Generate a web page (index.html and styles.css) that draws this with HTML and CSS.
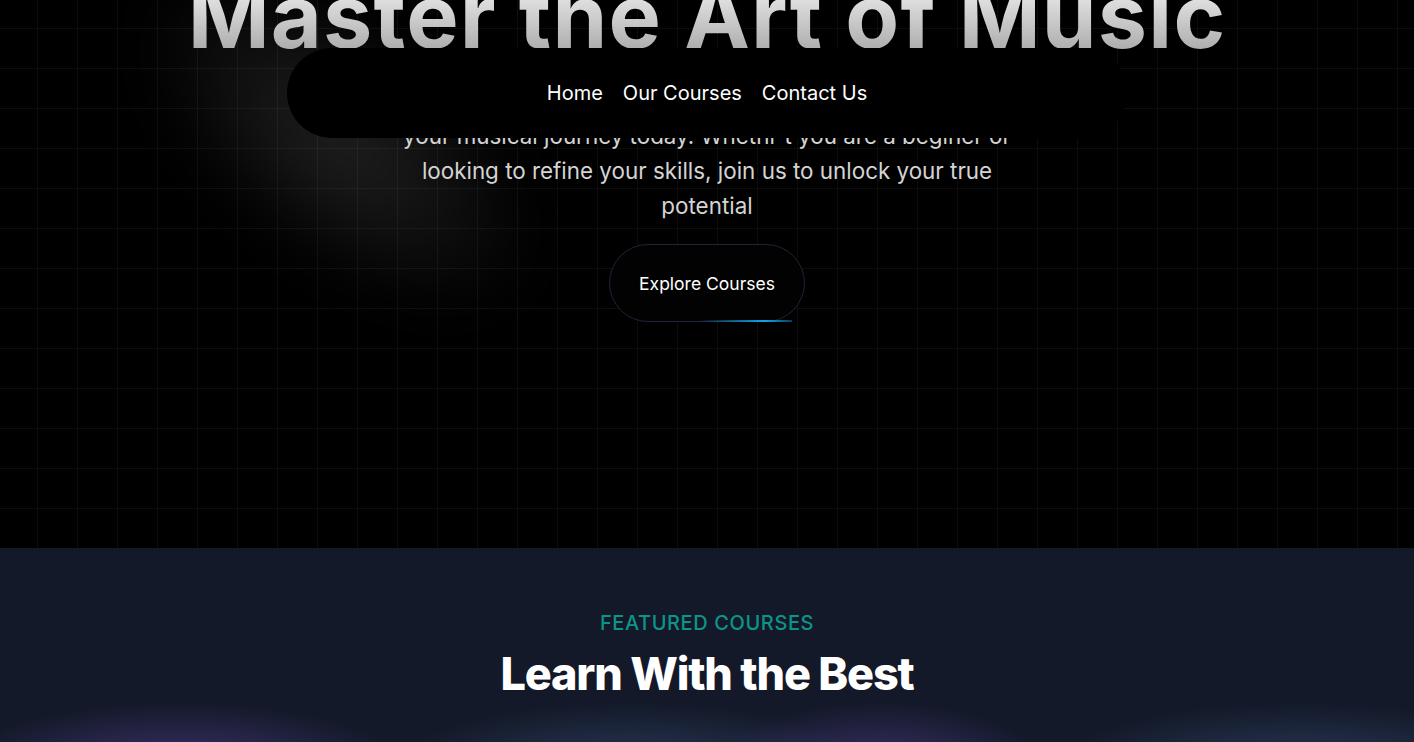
FILE: index.html
```html
<!DOCTYPE html>
<html lang="en">
<head>
<meta charset="utf-8">
<title>Music School</title>
<link rel="stylesheet" href="styles.css">
</head>
<body>
<nav class="nav">
  <a class="nav-link" href="#">Home</a>
  <a class="nav-link" href="#">Our Courses</a>
  <a class="nav-link" href="#">Contact Us</a>
</nav>
<main>
  <section class="hero">
    <div class="spotlight"></div>
    <div class="hero-content">
      <h1 class="hero-title">Master the Art of Music</h1>
      <p class="hero-text">Dive into our comprehensive music courses and transform<br>your musical journey today. Whethr't you are a beginer or looking to refine your skills, join us to unlock your true potential</p>
      <a class="hero-button" href="#">Explore Courses</a>
    </div>
  </section>
  <section class="featured">
    <p class="featured-label">FEATURED COURSES</p>
    <h2 class="featured-title">Learn With the Best</h2>
    <div class="featured-glows"></div>
  </section>
</main>
</body>
</html>
```
FILE: styles.css
```css
* { box-sizing: border-box; }
html, body { margin: 0; padding: 0; }
body {
  background: #000;
  font-family: Inter, "Noto Sans", sans-serif;
  color: #fff;
  overflow: hidden;
}
.nav {
  position: fixed;
  top: 48px;
  left: 50%;
  transform: translateX(-50%);
  width: 840px;
  height: 90px;
  border-radius: 45px;
  background: #000;
  display: flex;
  align-items: center;
  justify-content: center;
  gap: 20px;
  z-index: 10;
}
.nav-link {
  color: #fff;
  text-decoration: none;
  font-size: 20px;
  line-height: 24px;
}
.hero {
  position: relative;
  height: 548px;
  background-color: #000;
  background-image:
    linear-gradient(to right, #0d0d0d 1px, transparent 1px),
    linear-gradient(to bottom, #0d0d0d 1px, transparent 1px);
  background-size: 40px 40px;
  background-position: 37px 28px;
  overflow: hidden;
}
.spotlight {
  position: absolute;
  left: 100px;
  top: 20px;
  width: 480px;
  height: 240px;
  transform: rotate(38deg);
  background: radial-gradient(ellipse at center, rgba(255,255,255,0.13) 0%, rgba(255,255,255,0.06) 40%, rgba(255,255,255,0) 70%);
  filter: blur(28px);
}
.hero-content {
  position: relative;
  display: flex;
  flex-direction: column;
  align-items: center;
  margin-top: -28px;
}
.hero-title {
  margin: 0;
  font-size: 88px;
  line-height: 88px;
  font-weight: 700;
  letter-spacing: 1.2px;
  background: linear-gradient(to bottom, #fafafa, #a3a3a3);
  -webkit-background-clip: text;
  background-clip: text;
  color: transparent;
  white-space: nowrap;
}
.hero-text {
  margin: 23px 0 0;
  max-width: 640px;
  text-align: center;
  font-size: 22.4px;
  line-height: 35px;
  color: #d4d4d4;
}
.hero-button {
  position: relative;
  margin-top: 21px;
  display: inline-flex;
  align-items: center;
  justify-content: center;
  width: 196px;
  height: 78px;
  border-radius: 39px;
  border: 1px solid #1c2636;
  background: #020202;
  color: #fff;
  text-decoration: none;
  font-size: 17.5px;
}
.hero-button::after {
  content: "";
  position: absolute;
  left: 88px;
  bottom: -1px;
  width: 94px;
  height: 2px;
  background: linear-gradient(to right, rgba(14,165,233,0), #0ea5e9 70%, rgba(14,165,233,0.4));
}
.featured {
  position: relative;
  background: #131928;
  padding-top: 62px;
  text-align: center;
  height: 400px;
}
.featured-label {
  margin: 0;
  color: #0d9488;
  font-size: 20px;
  line-height: 26px;
  font-weight: 500;
  letter-spacing: 0.6px;
}
.featured-title {
  margin: 10px 0 0;
  font-size: 45px;
  line-height: 56px;
  font-weight: 800;
  letter-spacing: -1.2px;
}
.featured-glows {
  height: 120px;
  margin-top: 0;
  background:
    radial-gradient(ellipse 230px 70px at 180px 70px, rgba(70,55,125,0.85), rgba(70,55,125,0) 100%),
    radial-gradient(ellipse 240px 70px at 630px 70px, rgba(55,75,115,0.65), rgba(55,75,115,0) 100%),
    radial-gradient(ellipse 170px 70px at 880px 70px, rgba(70,55,125,0.8), rgba(70,55,125,0) 100%),
    radial-gradient(ellipse 250px 70px at 1300px 70px, rgba(55,75,115,0.65), rgba(55,75,115,0) 100%);
}
```
